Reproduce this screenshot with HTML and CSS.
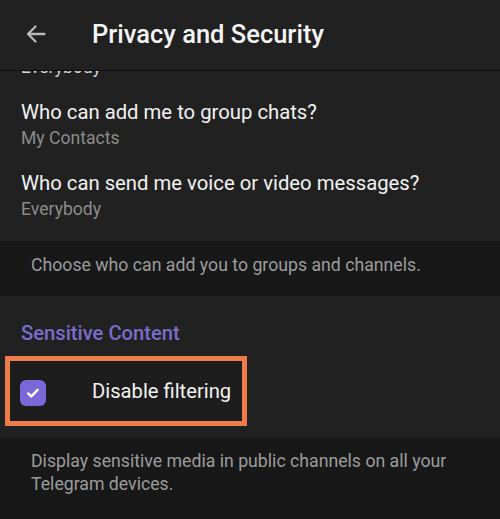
FILE: index.html
```html
<!DOCTYPE html>
<html>
<head>
<meta charset="utf-8">
<link rel="stylesheet" href="styles.css">
</head>
<body>
<header class="topbar">
  <svg class="back" width="24" height="24" viewBox="0 0 24 24"><path d="M20.5 12H4.5M11.5 4.5L4 12l7.5 7.5" fill="none" stroke="#b9b9b9" stroke-width="2.3" stroke-linecap="round" stroke-linejoin="round"/></svg>
  <h1 class="title">Privacy and Security</h1>
</header>
<main class="scroller">
  <section class="card card-first">
    <div class="row row-partial">
      <div class="sub">Everybody</div>
    </div>
    <div class="row">
      <div class="label">Who can add me to group chats?</div>
      <div class="sub">My Contacts</div>
    </div>
    <div class="row">
      <div class="label">Who can send me voice or video messages?</div>
      <div class="sub">Everybody</div>
    </div>
  </section>
  <div class="note note-one">Choose who can add you to groups and channels.</div>
  <section class="card card-second">
    <div class="section-title">Sensitive Content</div>
    <div class="highlight">
      <span class="check">
        <svg width="16" height="16" viewBox="0 0 16 16"><path d="M3.2 8.4l3.1 3 6.3-6.6" fill="none" stroke="#fff" stroke-width="2.4" stroke-linecap="round" stroke-linejoin="round"/></svg>
      </span>
      <span class="check-label">Disable filtering</span>
    </div>
  </section>
  <div class="note note-two">Display sensitive media in public channels on all your Telegram devices.</div>
</main>
</body>
</html>
```
FILE: styles.css
```css
* { box-sizing: border-box; }
html, body { margin: 0; padding: 0; }
body {
  width: 500px;
  height: 519px;
  overflow: hidden;
  background: #181818;
  font-family: Roboto, "Noto Sans", sans-serif;
  color: #f2f2f2;
}
.topbar {
  height: 71px;
  background: #212121;
  border-bottom: 1px solid #0f0f0f;
  display: flex;
  align-items: center;
  padding-left: 24px;
}
.back { display: block; margin-top: -2px; }
.title {
  margin: -2px 0 0 44px;
  font-size: 25.5px;
  font-weight: 500;
  line-height: 30px;
  color: #f4f4f4;
}
.scroller {
  height: 448px;
  overflow: hidden;
}
.card {
  background: #212121;
}
.card-first { padding-bottom: 10px; }
.row {
  padding: 11px 21px;
}
.row-partial {
  margin-top: -15px;
  padding-top: 0;
}
.label {
  font-size: 20.3px;
  line-height: 24px;
  color: #f2f2f2;
}
.sub {
  margin-top: 3px;
  font-size: 17.6px;
  line-height: 22px;
  color: #8c8c8c;
}
.row-partial .sub { margin-top: 0; color: #d8d8d8; }
.note {
  background: #181818;
  color: #9c9c9c;
  font-size: 17.7px;
  line-height: 22px;
  padding: 13px 21px 20px 31px;
}
.note-two {
  line-height: 23px;
  padding-top: 12px;
  padding-right: 36px;
}
.card-second {
  padding: 25px 0 12px 5px;
}
.section-title {
  padding-left: 16px;
  font-size: 20.2px;
  font-weight: 500;
  line-height: 24px;
  color: #7a6dcc;
}
.highlight {
  margin-top: 11px;
  width: 242px;
  height: 70px;
  border: 5px solid #ef7d4c;
  display: flex;
  align-items: center;
  padding-left: 10px;
  background: #1d1d1d;
}
.check {
  width: 26px;
  height: 26px;
  border-radius: 6px;
  background: #7a68d8;
  display: flex;
  align-items: center;
  justify-content: center;
  margin-top: 3px;
}
.check-label {
  margin-left: 46px;
  font-size: 20.2px;
  line-height: 24px;
  color: #f2f2f2;
}
```
